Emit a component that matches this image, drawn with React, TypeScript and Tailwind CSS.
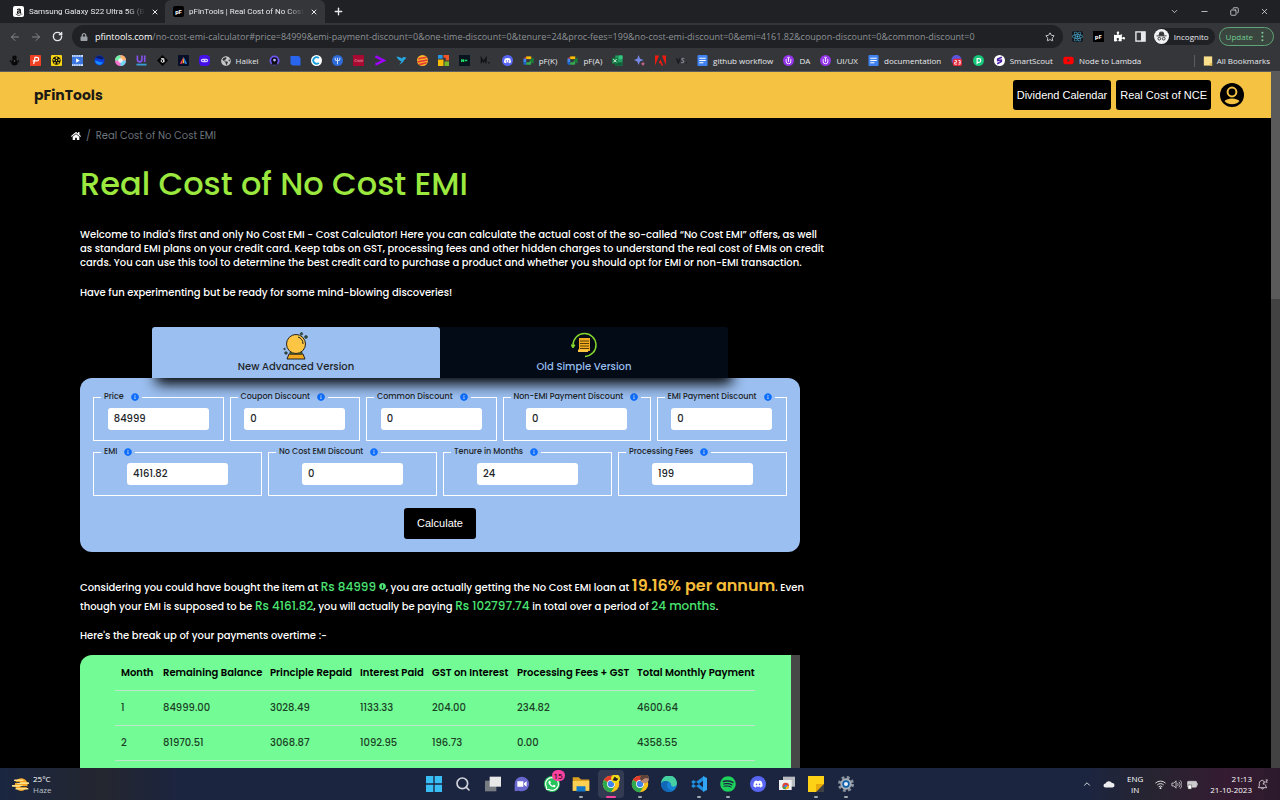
import type { ReactNode } from "react";
import { ArrowLeft, ArrowRight, ChevronDown, ChevronUp, Copy, Minus, Plus, RotateCw, Search, Star, X } from "lucide-react";
import { FaAmazon, FaDiscord, FaGlobeAmericas, FaHome, FaInfoCircle, FaLock, FaPuzzlePiece, FaReact, FaSpotify, FaWhatsapp, FaYoutube } from "react-icons/fa";

type Bookmark = { id: string; icon: ReactNode; label?: string };

function Icon({ children, className = "h-[11px] w-[11px]" }: { children: ReactNode; className?: string }) {
  return (
    <svg viewBox="0 0 24 24" className={`shrink-0 ${className}`} fill="none" aria-hidden="true">
      {children}
    </svg>
  );
}

const docs = (
  <Icon>
    <rect x="1" width="22" height="24" rx="2" fill="#3f82f0" />
    <path d="M5 7h14M5 12h14M5 17h9" stroke="#fff" strokeWidth="2.4" />
  </Icon>
);

const meet = (
  <Icon>
    <path d="M1 8 7 3v5z" fill="#ea4335" />
    <path d="M7 3h11v6H7z" fill="#fbbc04" />
    <path d="M1 8h6v8H1z" fill="#4285f4" />
    <path d="M1 16h6v5H3a2 2 0 0 1-2-2z" fill="#1967d2" />
    <path d="M7 16h6l5-5v8a2 2 0 0 1-2 2H7z" fill="#34a853" />
    <path d="m14 12 9-7v14z" fill="#188038" />
  </Icon>
);

const upwork = (
  <Icon>
    <circle cx="12" cy="12" r="12" fill="#9333ea" />
    <path d="M7 9v6a5 4 0 0 0 10 0V9M12 15V6M9 7l3-3 3 3" stroke="#fff" strokeWidth="2" />
  </Icon>
);

const bookmarks: Bookmark[] = [
  { id: "ink", icon: <Icon><circle cx="12" cy="6" r="5" fill="#090909" /><circle cx="12" cy="16" r="7" fill="#090909" /><path d="M3 11v5M21 11v5" stroke="#090909" strokeWidth="2" /><circle cx="12" cy="13" r="1.6" fill="#777" /></Icon> },
  { id: "picks", icon: <Icon><rect width="24" height="24" rx="1" fill="#ee4023" /><path d="M8 20 11 5h4a4 4 0 0 1 0 8H6" stroke="#fff" strokeWidth="2.6" /></Icon> },
  { id: "reel", icon: <Icon><rect width="24" height="24" rx="2" fill="#f7d514" /><circle cx="12" cy="12" r="9" fill="#111" /><circle cx="12" cy="12" r="1.4" fill="#f7d514" /><g fill="#f7d514"><circle cx="12" cy="6.5" r="2" /><circle cx="17.5" cy="10.5" r="2" /><circle cx="6.5" cy="10.5" r="2" /><circle cx="8.5" cy="17" r="2" /><circle cx="15.5" cy="17" r="2" /></g></Icon> },
  { id: "film", icon: <Icon><rect width="24" height="24" fill="#d8e5fb" /><rect y="4" width="24" height="16" fill="#3a76de" /><path d="m9 7 8 5-8 5z" fill="#fff" /><path d="M2 2h20M2 22h20" stroke="#3a76de" strokeWidth="2" strokeDasharray="3 2" /></Icon> },
  { id: "waves", icon: <Icon><circle cx="12" cy="12" r="11" fill="#0a3dd8" /><path d="M2 8c5-5 9 5 20 0a11 11 0 0 0-19-2z" fill="#0d1c69" /><path d="M2 13c6-2 9 5 18 2l-5 6c-6 2-11-2-13-8z" fill="#168cff" /></Icon> },
  { id: "wheel", icon: <Icon><circle cx="12" cy="12" r="12" fill="#f673cf" /><path d="M12 0a12 12 0 0 1 12 12H12z" fill="#ffb36b" /><path d="M24 12a12 12 0 0 1-12 12V12z" fill="#6ed7f5" /><path d="M0 12A12 12 0 0 1 12 0v12z" fill="#6ff2a5" /><circle cx="12" cy="12" r="5" fill="#fff" opacity=".8" /></Icon> },
  { id: "ui", icon: <Icon><path d="M3 1v9a5 5 0 0 0 10 0V1M19 1v14" stroke="#8551ed" strokeWidth="3.6" /><path d="M1 21h22" stroke="#389bd1" strokeWidth="4" /></Icon> },
  { id: "diamond", icon: <Icon><path d="m12 0 12 12-12 12L0 12z" fill="#050505" /><circle cx="12" cy="13" r="3" stroke="#fff" strokeWidth="2" /><path d="M9 8h6v8" stroke="#fff" strokeWidth="2" /></Icon> },
  { id: "prism", icon: <Icon><rect width="24" height="24" rx="2" fill="#060f27" /><path d="M12 4 4 19h5z" fill="#f53a58" /><path d="m12 4-2 14h4z" fill="#fbba2d" /><path d="m12 4 8 15h-5z" fill="#2b8dfa" /></Icon> },
  { id: "dots", icon: <Icon><rect width="24" height="24" rx="8" fill="#4510e8" /><rect x="4" y="8" width="16" height="8" rx="4" fill="#d2cbff" /><path d="M7 12h3M14 12h3" stroke="#4510e8" strokeWidth="2" /></Icon> },
  { id: "haikei", icon: <FaGlobeAmericas className="h-[10px] w-[10px] text-[#c4c7c5]" />, label: "Haikei" },
  { id: "ring", icon: <Icon><circle cx="12" cy="12" r="11" fill="#6b55ef" /><circle cx="12" cy="12" r="7" fill="#0d0d19" /><circle cx="12" cy="11" r="3" fill="#c3bfff" /><path d="M6 21a6 6 0 0 1 12 0z" fill="#111" /></Icon> },
  { id: "blue", icon: <Icon><path d="M1 2h15a7 7 0 0 1 7 7v14H8a7 7 0 0 1-7-7z" fill="#2965ed" /></Icon> },
  { id: "coin", icon: <Icon><circle cx="12" cy="12" r="12" fill="#fff" /><path d="M17 7a7 7 0 1 0 0 10" stroke="#159edb" strokeWidth="4" /></Icon> },
  { id: "fork", icon: <Icon><circle cx="12" cy="12" r="12" fill="#2c6bd9" /><path d="M12 20V6M7 6v4c0 3 10 3 10 0V6" stroke="#c9defc" strokeWidth="2.2" /></Icon> },
  { id: "cups", icon: <Icon><rect width="24" height="24" fill="#a80a32" /><path d="M8 10H4v4h4M10 11h3v3h-3zM15 16v-5h4v3h-3M21 10v5" stroke="#e890a2" strokeWidth="1.2" /></Icon> },
  { id: "accent", icon: <Icon><path d="m1 3 18 9-18 9" stroke="#a100ff" strokeWidth="5" /></Icon> },
  { id: "bird", icon: <Icon><path d="M1 3c5 0 9 2 12 5 2-4 5-4 6-3l4 1-5 5c-2 5-6 8-11 10l5-7C8 12 3 9 1 3z" fill="#27a8e0" /></Icon> },
  { id: "burger", icon: <Icon><circle cx="12" cy="12" r="12" fill="#f8b62b" /><path d="M3 8 21 5M1 15l22-4M5 21l16-4" stroke="#e3382f" strokeWidth="3.4" /></Icon> },
  { id: "blocks", icon: <Icon><path d="M0 0h10v8H0z" fill="#2299e7" /><path d="M0 10h12v14H0z" fill="#f8bd09" /><path d="M12 0h12v12h-7V6h-5z" fill="#ee5428" /><path d="M14 14h10v10H14z" fill="#79b829" /></Icon> },
  { id: "rank", icon: <Icon><rect width="24" height="24" fill="#08151e" /><path d="M6 9v6M10 9v6M6 12h4M13 12h5" stroke="#20dd6a" strokeWidth="3" /></Icon> },
  { id: "m", icon: <Icon><path d="M3 18V7l5 8 5-8v11M18 17h3" stroke="#111214" strokeWidth="3" /></Icon> },
  { id: "discord", icon: <Icon><circle cx="12" cy="12" r="12" fill="#5865f2" /><path d="M6 8c4-2 8-2 12 0l2 8-4 2-2-2h-4l-2 2-4-2z" fill="#fff" /><circle cx="9.5" cy="13" r="1.5" fill="#5865f2" /><circle cx="14.5" cy="13" r="1.5" fill="#5865f2" /></Icon> },
  { id: "pfk", icon: meet, label: "pF(K)" },
  { id: "pfa", icon: meet, label: "pF(A)" },
  { id: "excel", icon: <Icon><path d="M7 1h16v22H7z" fill="#1f9f60" /><path d="M15 1h8v8h-8z" fill="#35c481" /><path d="M7 16h16v7H7z" fill="#135f39" /><rect y="6" width="13" height="13" fill="#107c41" /><path d="m3 9 7 7M10 9l-7 7" stroke="#fff" strokeWidth="2" /></Icon> },
  { id: "spark", icon: <Icon><path d="m10 0 3 8 8 3-8 3-3 8-3-8-7-3 7-3z" fill="#7588e8" /><path d="m20 14 1 4 3 1-3 2-1 3-2-3-3-2 3-1z" fill="#d36692" /></Icon> },
  { id: "adobe", icon: <Icon><path d="M0 1h9L0 23zM15 1h9v22zM12 9l6 14h-4l-2-5H8z" fill="#ed1c0e" /></Icon> },
  { id: "vs", icon: <Icon><path d="m1 7 4 10L9 7" stroke="#171a21" strokeWidth="3" /><path d="M18 8c-5-2-7 2-3 4s2 6-4 4" stroke="#7a8089" strokeWidth="3" /><circle cx="22" cy="17" r="1.5" fill="#171a21" /></Icon> },
  { id: "github", icon: docs, label: "github workflow" },
  { id: "da", icon: upwork, label: "DA" },
  { id: "uiux", icon: upwork, label: "UI/UX" },
  { id: "documentation", icon: docs, label: "documentation" },
  { id: "calendar", icon: <Icon><circle cx="12" cy="11" r="11" fill="#5a55dc" /><rect x="4" y="8" width="20" height="16" rx="4" fill="#e22939" /><path d="M8 12h4v4H8v4h5M16 12h4v8h-4M17 16h3" stroke="#fff" strokeWidth="1.8" /></Icon> },
  { id: "p", icon: <Icon><circle cx="12" cy="12" r="12" fill="#16c87a" /><path d="M9 20V8h4a4 4 0 0 1 0 8H9" stroke="#fff" strokeWidth="2.6" /></Icon> },
  { id: "scout", icon: <Icon><circle cx="12" cy="12" r="12" fill="#fff" /><path d="m17 5-9 4v3l8-1v3l-9 5" stroke="#4921a5" strokeWidth="3.4" /></Icon>, label: "SmartScout" },
  { id: "lambda", icon: <FaYoutube className="h-[11px] w-[11px] text-[#f00]" />, label: "Node to Lambda" },
];

function PfBadge({ className }: { className: string }) {
  return <span className={`flex shrink-0 items-center justify-center bg-black text-[6px] leading-none font-bold text-white ${className}`}>pF</span>;
}

function Browser() {
  return (
    <div className="shrink-0 bg-[#35363a] font-['Open_Sans',sans-serif] text-[#e8eaed]">
      <div className="flex h-[23px] items-center bg-[#202124] font-['Roboto',sans-serif] text-[8px]">
        <div className="flex w-[165px] items-center pr-1.5 pl-[13px]">
          <span className="flex h-[11px] w-[11px] shrink-0 items-center justify-center rounded-xs bg-white text-black">
            <FaAmazon className="h-2 w-2" />
          </span>
          <span className="ml-[5px] flex-1 overflow-hidden whitespace-nowrap [mask-image:linear-gradient(to_right,black_85%,transparent)]">
            Samsung Galaxy S22 Ultra 5G (B
          </span>
          <button aria-label="Close tab" className="ml-1.5"><X className="h-2 w-2" strokeWidth={3} /></button>
        </div>
        <div className="flex h-full w-[160px] items-center rounded-t-md bg-[#35363a] pr-[7px] pl-2">
          <PfBadge className="h-[11px] w-[11px] rounded-xs" />
          <span className="ml-[5px] flex-1 overflow-hidden whitespace-nowrap [mask-image:linear-gradient(to_right,black_85%,transparent)]">
            pFinTools | Real Cost of No Cost
          </span>
          <button aria-label="Close tab" className="ml-1.5"><X className="h-2 w-2" strokeWidth={3} /></button>
        </div>
        <button aria-label="New tab" className="ml-2"><Plus className="h-[11px] w-[11px]" strokeWidth={3} /></button>
        <div className="mr-[11px] ml-auto flex items-center gap-[21px]">
          <ChevronDown className="h-[9px] w-[9px]" />
          <Minus className="h-[9px] w-[9px]" />
          <Copy className="h-[9px] w-[9px] -scale-x-100" />
          <X className="h-[9px] w-[9px]" />
        </div>
      </div>
      <div className="flex h-[27px] items-center pr-1.5 pl-[9px]">
        <button aria-label="Back"><ArrowLeft className="h-3 w-3 text-[#85878a]" /></button>
        <button aria-label="Forward" className="ml-[9px]"><ArrowRight className="h-3 w-3 text-[#85878a]" /></button>
        <button aria-label="Reload" className="ml-[10px]"><RotateCw className="h-[11px] w-[11px]" strokeWidth={3} /></button>
        <div className="ml-[9px] flex h-[23px] min-w-0 flex-1 items-center rounded-full bg-[#202124] pr-2 pl-2">
          <FaLock className="h-2 w-2 shrink-0 text-[#9aa0a6]" />
          <div role="textbox" aria-label="Address" className="ml-[7px] flex-1 overflow-hidden text-[9px] whitespace-nowrap text-[#8d9196]">
            <span className="text-white">pfintools.com</span>
            /no-cost-emi-calculator#price=84999&amp;emi-payment-discount=0&amp;one-time-discount=0&amp;tenure=24&amp;proc-fees=199&amp;no-cost-emi-discount=0&amp;emi=4161.82&amp;coupon-discount=0&amp;common-discount=0
          </div>
          <Star className="h-[10px] w-[10px] shrink-0" />
        </div>
        <FaReact className="ml-[9px] h-[11px] w-[11px] shrink-0 rounded-xs bg-[#15191f] text-[#4bb8dd]" />
        <PfBadge className="ml-[10px] h-[11px] w-[11px]" />
        <FaPuzzlePiece className="ml-[10px] h-[11px] w-[11px] shrink-0 text-white" />
        <Icon className="ml-[10px] h-[11px] w-[11px]">
          <rect x="2" y="2" width="20" height="20" stroke="#e8eaed" strokeWidth="3" />
          <path d="M13 2h9v20h-9z" fill="#e8eaed" />
        </Icon>
        <div className="ml-2 flex h-[17px] items-center rounded-full bg-[#202124] pr-1.5 text-[8px]">
          <Icon className="h-[15px] w-[15px]">
            <circle cx="12" cy="12" r="12" fill="#f1f3f4" />
            <path d="m8 10 1.5-5h5l1.5 5zM4 11h16" fill="#35363a" stroke="#35363a" strokeWidth="1.5" />
            <circle cx="8.5" cy="15.5" r="2.2" stroke="#35363a" strokeWidth="1.5" />
            <circle cx="15.5" cy="15.5" r="2.2" stroke="#35363a" strokeWidth="1.5" />
          </Icon>
          <span className="ml-[5px]">Incognito</span>
        </div>
        <button className="ml-1 flex h-[19px] items-center gap-[3px] rounded-full border border-[#5fa577] bg-[#3a4540] px-1.5 text-[8px] text-[#75c990]">
          Update
          <Icon className="h-[11px] w-[11px]">
            <g fill="#81c995"><circle cx="14" cy="4" r="2.2" /><circle cx="14" cy="12" r="2.2" /><circle cx="14" cy="20" r="2.2" /></g>
          </Icon>
        </button>
      </div>
      <div className="flex h-[22px] items-center border-b border-[#5b5c5f] pr-[10px] pl-[9px] text-[8px]">
        <nav className="mr-[52px] flex flex-1 items-center justify-between">
          {bookmarks.map((b) => (
            <a key={b.id} href="#" aria-label={b.label ?? b.id} className="flex items-center gap-[5px] whitespace-nowrap">
              {b.icon}
              {b.label}
            </a>
          ))}
        </nav>
        <a href="#" className="flex items-center gap-1 border-l border-[#5b5c5f] pl-2 whitespace-nowrap">
          <Icon className="h-[10px] w-[10px]"><path d="M2 1h20v22H2z" fill="#fbe08c" /><path d="M17 17h5v6h-5z" fill="#dfb94d" /></Icon>
          All Bookmarks
        </a>
      </div>
    </div>
  );
}

type FieldProps = { id: string; label: string; value: string };

const firstRow: FieldProps[] = [
  { id: "price", label: "Price", value: "84999" },
  { id: "coupon", label: "Coupon Discount", value: "0" },
  { id: "common", label: "Common Discount", value: "0" },
  { id: "non-emi", label: "Non-EMI Payment Discount", value: "0" },
  { id: "emi-payment", label: "EMI Payment Discount", value: "0" },
];

const secondRow: FieldProps[] = [
  { id: "emi", label: "EMI", value: "4161.82" },
  { id: "no-cost", label: "No Cost EMI Discount", value: "0" },
  { id: "tenure", label: "Tenure in Months", value: "24" },
  { id: "fees", label: "Processing Fees", value: "199" },
];

function Field({ id, label, value }: FieldProps) {
  return (
    <fieldset className="min-w-0 border border-white px-[7px] pt-[5px] pb-[10px]">
      <legend className="flex items-center gap-[7px] px-[3px] text-[8px] leading-3 font-medium whitespace-nowrap">
        <label htmlFor={id}>{label}</label>
        <FaInfoCircle className="h-2 w-2 text-[#0d6efd]" />
      </legend>
      <input id={id} defaultValue={value} className="mx-auto block h-[22px] w-[101px] rounded-[3px] bg-white px-1.5 text-[10px] font-medium text-[#212529]" />
    </fieldset>
  );
}

function CrystalBall() {
  return (
    <svg viewBox="0 0 26 28" className="h-7 w-[26px] shrink-0" aria-hidden="true">
      <path d="M6 22h14l2 5H4z" fill="#f2a81d" stroke="#222" strokeWidth="1" />
      <path d="M7 20h12v2H7z" fill="#4f8a2f" stroke="#222" strokeWidth=".7" />
      <circle cx="13" cy="12" r="9.5" fill="#fcc544" stroke="#222" strokeWidth="1" />
      <path d="M15 5c3 1 5 3 5 7" stroke="#222" fill="none" />
      <g fill="#315a42" stroke="#222" strokeWidth=".6"><circle cx="18.5" cy="1.8" r="1.2" /><circle cx="23" cy="5" r="1.4" /><circle cx="1.5" cy="17" r=".8" /><circle cx="3" cy="21" r="1.3" /></g>
    </svg>
  );
}

function OldScroll() {
  return (
    <svg viewBox="0 0 26 28" className="h-7 w-[26px] shrink-0" fill="none" aria-hidden="true">
      <path d="M2 13A11.5 11.5 0 1 1 14 24.5" stroke="#84d52c" strokeWidth="1.5" />
      <path d="m0 13 2 3 2-3z" fill="#84d52c" stroke="#84d52c" />
      <path d="M8 6h11v13H8z" fill="#f3ae20" />
      <path d="M7 17.500h10v2.500H7z" fill="#fcc544" />
      <path d="M9 9h9M9 11.500h9M9 14h9M9 16.500h9" stroke="#5b3c08" strokeWidth="1" />
    </svg>
  );
}

const columns = ["Month", "Remaining Balance", "Principle Repaid", "Interest Paid", "GST on Interest", "Processing Fees + GST", "Total Monthly Payment"];

const rows = [
  ["1", "84999.00", "3028.49", "1133.33", "204.00", "234.82", "4600.64"],
  ["2", "81970.51", "3068.87", "1092.95", "196.73", "0.00", "4358.55"],
];

function Amount({ children }: { children: ReactNode }) {
  return <span className="text-[12px] leading-none text-[#4be373]">{children}</span>;
}

function Page() {
  return (
    <div className="flex min-h-0 flex-1 overflow-hidden bg-black font-['Poppins','Inter',sans-serif] text-[10px] font-medium text-white">
      <div className="min-w-0 flex-1">
        <header className="flex h-[46px] items-center justify-between bg-[#f5c242] pr-[27px] pl-[34px]">
          <a href="#" className="text-[14px] leading-5 font-bold text-[#1c1a14]">pFinTools</a>
          <div className="flex items-center gap-[5px] font-['Liberation_Sans',sans-serif] text-[11px] font-normal">
            <button className="h-[30px] rounded-[3px] bg-black px-1">Dividend Calendar</button>
            <button className="h-[30px] rounded-[3px] bg-black px-1">Real Cost of NCE</button>
            <button aria-label="Account" className="ml-1">
              <Icon className="h-6 w-6">
                <circle cx="12" cy="12" r="12" fill="#000" />
                <circle cx="12" cy="9" r="4.4" stroke="#f5c242" strokeWidth="2" />
                <path d="M4.500 18c3-3.400 12-3.400 15 0-3.500 4.400-11.500 4.400-15 0z" fill="#f5c242" />
              </Icon>
            </button>
          </div>
        </header>
        <nav className="flex items-center gap-[5px] pt-[9px] pl-[71px] text-[10px] leading-[18px] font-normal text-[#6c757d]">
          <a href="#" aria-label="Home"><FaHome className="h-[10px] w-[10px] text-white" /></a>
          <span>/</span>
          <span>Real Cost of No Cost EMI</span>
        </nav>
        <main className="ml-20 max-w-[720px]">
          <h1 className="mt-[19px] text-[32px] leading-10 font-medium text-[#9be83f]">Real Cost of No Cost EMI</h1>
          <p className="mt-6 leading-[14px] whitespace-nowrap">
            Welcome to India's first and only No Cost EMI - Cost Calculator! Here you can calculate the actual cost of the so-called “No Cost EMI” offers, as well
            <br />
            as standard EMI plans on your credit card. Keep tabs on GST, processing fees and other hidden charges to understand the real cost of EMIs on credit
            <br />
            cards. You can use this tool to determine the best credit card to purchase a product and whether you should opt for EMI or non-EMI transaction.
          </p>
          <p className="mt-4 leading-[14px]">Have fun experimenting but be ready for some mind-blowing discoveries!</p>

          <div className="relative z-10 mx-[72px] mt-[27px] grid grid-cols-2 rounded-t-[3px] text-[10px] leading-[14px] shadow-[4px_6px_14px_#000]">
            <button className="flex h-[51px] flex-col items-center rounded-t-[3px] bg-[#9bbff0] pt-[5px] text-[#212529]">
              <CrystalBall />
              New Advanced Version
            </button>
            <button className="flex h-[51px] flex-col items-center rounded-tr-[3px] bg-[#020b16] pt-[5px] text-[#9bbff0]">
              <OldScroll />
              Old Simple Version
            </button>
          </div>
          <form className="rounded-xl bg-[#9bbff0] p-[13px] text-[#212529]">
            <div className="grid grid-cols-[1fr_1fr_1fr_148px_1fr] gap-1.5">
              {firstRow.map((f) => <Field key={f.id} {...f} />)}
            </div>
            <div className="mt-[5px] grid grid-cols-4 gap-1.5">
              {secondRow.map((f) => <Field key={f.id} {...f} />)}
            </div>
            <button type="button" className="mx-auto mt-3 block h-[31px] w-[72px] rounded-[3px] bg-black font-['Liberation_Sans',sans-serif] text-[11px] font-normal text-white">
              Calculate
            </button>
          </form>

          <p className="mt-[26px] leading-[19px] whitespace-nowrap">
            Considering you could have bought the item at <Amount>Rs 84999</Amount>{" "}
            <FaInfoCircle className="mb-1 inline h-[7px] w-[7px] text-[#4be373]" />, you are actually getting the No Cost EMI loan at{" "}
            <span className="text-[16px] leading-none font-semibold text-[#f6bd3a]">19.16% per annum</span>. Even
            <br />
            though your EMI is supposed to be <Amount>Rs 4161.82</Amount>, you will actually be paying <Amount>Rs 102797.74</Amount> in total over a period of <Amount>24 months</Amount>.
          </p>
          <p className="mt-[13px] leading-[14px]">Here's the break up of your payments overtime :-</p>

          <div className="mt-3 flex">
            <div className="flex-1 rounded-tl-xl bg-[#73fc95] pr-9 pb-9 pl-[35px] text-[#1b3f26]">
              <table className="w-full table-fixed border-collapse text-left whitespace-nowrap">
                <colgroup>
                  <col className="w-[42px]" />
                  <col className="w-[107px]" />
                  <col className="w-[90px]" />
                  <col className="w-[72px]" />
                  <col className="w-[85px]" />
                  <col className="w-[120px]" />
                  <col />
                </colgroup>
                <thead>
                  <tr className="h-[35px] border-b border-[#bfe5ca] text-black">
                    {columns.map((c) => <th key={c} className="pl-1.5 font-semibold">{c}</th>)}
                  </tr>
                </thead>
                <tbody>
                  {rows.map((row) => (
                    <tr key={row[0]} className="h-[35px] border-b border-[#bfe5ca]">
                      {row.map((cell, i) => <td key={columns[i]} className="pl-1.5">{cell}</td>)}
                    </tr>
                  ))}
                </tbody>
              </table>
            </div>
            <div className="w-[9px] bg-[#474747]" />
          </div>
        </main>
      </div>
      <div className="w-[9px] shrink-0 bg-[#424242]">
        <div className="h-[227px] bg-[#5a5a5a]" />
      </div>
    </div>
  );
}

function Chrome({ children }: { children?: ReactNode }) {
  return (
    <Icon className="h-[18px] w-[18px]">
      <circle cx="12" cy="12" r="11" fill="#fbc116" />
      <path d="M12 12 2.5 6.5A11 11 0 0 1 21.5 6.5H12z" fill="#e33b2e" />
      <path d="m12 23 5-8.5-5-2.5-9.5-5.5A11 11 0 0 0 12 23z" fill="#2da94f" />
      <circle cx="12" cy="12" r="5.2" fill="#fff" />
      <circle cx="12" cy="12" r="4.2" fill="#3f83ef" />
      {children}
    </Icon>
  );
}

const apps = [
  { id: "Start", icon: <Icon className="h-4 w-4"><path d="M0 0h11v11H0zM13 0h11v11H13zM0 13h11v11H0zM13 13h11v11H13z" fill="#38bdf5" /></Icon> },
  { id: "Search", icon: <Search className="h-4 w-4 text-[#cfd3da]" strokeWidth={2.5} /> },
  { id: "Task view", icon: <Icon className="h-4 w-4"><rect y="7" width="17" height="16" fill="#777b82" /><rect x="7" y="1" width="17" height="15" fill="#e8e8e8" /></Icon> },
  { id: "Chat", icon: <Icon className="h-4 w-4"><path d="M12 1a11 11 0 1 1-5 21l-6 1V12A11 11 0 0 1 12 1z" fill="#6a68cf" /><path d="M5 8h9v8H5zM15 11l4-3v8l-4-3z" fill="#fff" /></Icon> },
  { id: "WhatsApp", icon: <FaWhatsapp className="h-4 w-4 rounded-full bg-[#25c45a] text-white" />, badge: "15" },
  { id: "Files", icon: <Icon className="h-[18px] w-[18px]"><path d="M1 3h8l3 3h11v15H1z" fill="#dca121" /><path d="M1 8h22v13H1z" fill="#fbd053" /><path d="M6 15h12v7H6z" fill="#1377c9" /></Icon>, open: true },
  { id: "Chrome", icon: <Chrome><circle cx="18" cy="5" r="6" fill="#f5da18" /><path d="m14 7 3-5 2 2 3 1-3 3z" fill="#222" /></Chrome>, open: true, active: true },
  { id: "Chrome profile", icon: <Chrome><circle cx="18" cy="5" r="6" fill="#b98a74" /><path d="M12 5a6 6 0 0 1 12 0l-4-1-3 1-3 3z" fill="#5d4239" /></Chrome>, open: true },
  { id: "Edge", icon: <Icon className="h-4 w-4"><circle cx="12" cy="12" r="12" fill="#1682d4" /><path d="M0 11a12 12 0 0 1 24 0c0 6-8 6-9 3 2-6-9-9-15-3z" fill="#46cfa1" /><path d="M0 12c1-5 8-6 12-3-5 2-4 11 4 13C7 26 0 20 0 12z" fill="#1268b8" /></Icon> },
  { id: "Code", icon: <Icon className="h-4 w-4"><path d="m1 8 3-2 14 11v6L1 10zM1 16l3 2L18 7V1L1 14z" fill="#1f8fe0" /><path d="m18 0 6 3v18l-6 3z" fill="#32a5f5" /></Icon>, open: true },
  { id: "Spotify", icon: <FaSpotify className="h-4 w-4 text-[#1ed05c]" />, open: true },
  { id: "Discord", icon: <span className="flex h-4 w-4 items-center justify-center rounded-full bg-[#5865f2]"><FaDiscord className="h-[10px] w-[10px] text-white" /></span> },
  { id: "Apps", icon: <Icon className="h-4 w-4"><rect x="6" y="1" width="18" height="15" fill="#b8bcc0" /><rect y="6" width="19" height="15" fill="#eef0f2" /><circle cx="10" cy="15" r="5" fill="#e34235" /><path d="M5 16a5 5 0 0 0 5 4v-4z" fill="#30a853" /><path d="M10 20a5 5 0 0 0 5-5h-5z" fill="#fbc116" /><circle cx="10" cy="15" r="2" fill="#4285f4" /></Icon> },
  { id: "Notes", icon: <Icon className="h-4 w-4"><path d="M0 0h24v24H0z" fill="#fcd116" /><path d="M12 12h12v12H12z" fill="#3f4046" /><path d="M12 24V12h12z" fill="#e8a90a" /></Icon>, open: true },
  { id: "Settings", icon: <Icon className="h-4 w-4"><circle cx="12" cy="12" r="9.5" stroke="#88929d" strokeWidth="5" strokeDasharray="4 3.46" /><circle cx="12" cy="12" r="7" fill="#0e60ac" stroke="#a5adb6" strokeWidth="3" /><circle cx="12" cy="12" r="3" fill="#e4f1ff" /></Icon>, open: true },
];

function Taskbar() {
  return (
    <footer className="grid h-8 shrink-0 grid-cols-[1fr_auto_1fr] items-center bg-[linear-gradient(to_right,#1a2640,#24262f_8%,#1c2540_14%,#1c2540_85%,#272430_90%,#351b32_96%,#2c1a2c)] font-['Open_Sans',sans-serif] text-[8px] leading-[11px] text-white">
      <div className="flex items-center gap-1 pl-3">
        <Icon className="h-[17px] w-[17px]">
          <circle cx="13" cy="12" r="9" fill="#f6a623" />
          <path d="M4 6h11M8 10h15M1 14h13M6 18h16" stroke="#ffe08a" strokeWidth="2.4" strokeLinecap="round" />
          <path d="M2 9h9M12 15h10" stroke="#1a2640" strokeWidth="1.4" />
        </Icon>
        <div>
          <div>25°C</div>
          <div className="text-[#bcc0c8]">Haze</div>
        </div>
      </div>
      <div className="flex w-[438px] justify-between">
        {apps.map((app) => (
          <button key={app.id} aria-label={app.id} className={`relative flex h-7 w-[26px] items-center justify-center rounded-sm ${app.active ? "bg-white/10" : ""}`}>
            {app.icon}
            {app.badge && <span className="absolute top-0 right-0 rounded-full bg-[#f9429e] px-[2px] text-[8px] leading-[11px] text-black">{app.badge}</span>}
            {app.open && <span className={`absolute bottom-0 h-0.5 rounded-full ${app.active ? "w-[10px] bg-[#f9429e]" : "w-1 bg-[#a5a9b2]"}`} />}
          </button>
        ))}
      </div>
      <div className="flex items-center justify-end pr-3">
        <ChevronUp className="h-[10px] w-[10px]" />
        <Icon className="ml-[11px] h-3 w-3"><path d="M5 19a4 4 0 0 1 0-8 7 6 0 0 1 13-1 4.5 4.5 0 0 1 1 9z" fill="#eee" /></Icon>
        <div className="ml-3 text-center">
          <div>ENG</div>
          <div>IN</div>
        </div>
        <div className="ml-3 flex items-center gap-[5px]">
          <Icon><path d="M1 9a16 16 0 0 1 22 0M5 13a10 10 0 0 1 14 0M8 17a6 6 0 0 1 8 0" stroke="#eee" strokeWidth="2" /><circle cx="12" cy="20" r="2" fill="#eee" /></Icon>
          <Icon><path d="M2 9v6h4l5 5V4L6 9zM14 9c2 2 2 4 0 6M17 6c4 4 4 8 0 12M20 3c5 6 5 12 0 18" stroke="#ddd" strokeWidth="1.8" /></Icon>
          <Icon><rect x="1" y="5" width="20" height="13" rx="2" fill="#ccc" stroke="#eee" /><path d="M22 9v5" stroke="#eee" strokeWidth="2" /><path d="M2 13h8v9H2z" fill="#fff" stroke="#333" /></Icon>
        </div>
        <div className="ml-3 text-right">
          <div>21:13</div>
          <div>21-10-2023</div>
        </div>
        <Icon className="ml-[5px] h-[11px] w-[11px]"><path d="M14 3a7 7 0 0 0-9 7v5l-2 4h18l-2-4v-3M10 20a2 2 0 0 0 4 0M13 6h4l-4 5h4M19 2h4l-4 5h4" stroke="#e5dfe5" strokeWidth="1.8" /></Icon>
      </div>
    </footer>
  );
}

export default function App() {
  return (
    <div className="flex h-screen flex-col overflow-hidden">
      <Browser />
      <Page />
      <Taskbar />
    </div>
  );
}
